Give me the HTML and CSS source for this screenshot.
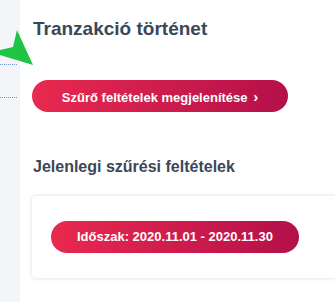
FILE: index.html
```html
<!DOCTYPE html>
<html lang="hu">
<head>
<meta charset="utf-8">
<link rel="stylesheet" href="styles.css">
</head>
<body>
<div class="layout">
  <aside class="sidebar">
    <div class="side-item first"></div>
    <div class="side-item"></div>
  </aside>
  <main class="main">
    <h1 class="title">Tranzakció történet</h1>
    <button class="btn btn-toggle">Szűrő feltételek megjelenítése <span class="chev">&#x203A;</span></button>
    <h2 class="subtitle">Jelenlegi szűrési feltételek</h2>
    <div class="card">
      <span class="pill">Időszak: 2020.11.01 - 2020.11.30</span>
    </div>
  </main>
  <svg class="pointer" width="40" height="70" viewBox="0 0 40 70">
    <polygon points="17,30 33,65 0,55 0,50 13,47" fill="#1fc447"/>
  </svg>
</div>
</body>
</html>
```
FILE: styles.css
```css
html, body {
  margin: 0;
  padding: 0;
  background: #ffffff;
  font-family: "Liberation Sans", Arial, sans-serif;
}
.layout {
  position: relative;
  display: flex;
  width: 335px;
  height: 302px;
  overflow: hidden;
}
.sidebar {
  width: 20px;
  flex: 0 0 20px;
  background: #f3f5f9;
}
.side-item {
  height: 32px;
  margin-right: 3px;
  border-bottom: 1px dotted #6f95cf;
}
.side-item.first {
  height: 64px;
}
.main {
  flex: 1 1 auto;
  padding-left: 12px;
  min-width: 0;
}
.title {
  margin: 18px 0 0 1px;
  font-size: 19px;
  line-height: 22px;
  font-weight: bold;
  color: #3b4759;
}
.btn {
  border: 0;
  font-family: inherit;
  cursor: pointer;
}
.btn-toggle {
  margin-top: 40px;
  height: 32px;
  width: 256px;
  border-radius: 16px;
  background: linear-gradient(90deg, #e9294f 0%, #b3104a 100%);
  color: #ffffff;
  font-size: 13px;
  font-weight: bold;
  padding: 0;
  text-align: center;
  display: block;
}
.chev {
  font-size: 15px;
  margin-left: 2px;
}
.subtitle {
  margin: 45px 0 0 1px;
  font-size: 16px;
  line-height: 20px;
  font-weight: bold;
  color: #3b4759;
}
.card {
  margin-top: 19px;
  width: 330px;
  height: 82px;
  box-sizing: border-box;
  padding: 25px 0 0 19px;
  background: #ffffff;
  border-radius: 3px;
  box-shadow: 0 0 4px rgba(0, 0, 0, 0.14);
}
.pill {
  display: inline-block;
  height: 32px;
  line-height: 32px;
  padding: 0 26px;
  border-radius: 16px;
  background: linear-gradient(90deg, #e9294f 0%, #b3104a 100%);
  color: #ffffff;
  font-size: 13px;
  font-weight: bold;
}
.pointer {
  position: absolute;
  left: 0;
  top: 0;
}
```
